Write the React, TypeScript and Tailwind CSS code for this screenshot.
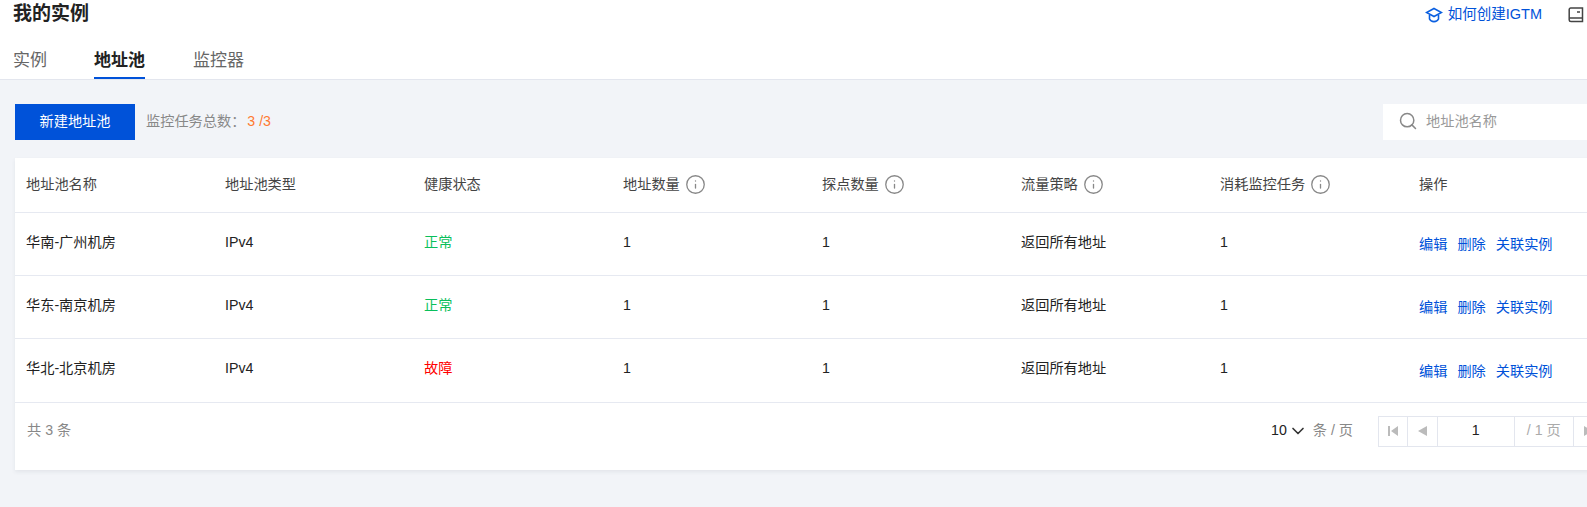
import { Info, Search, ChevronDown } from 'lucide-react';

const columns = [
  { title: '地址池名称' },
  { title: '地址池类型' },
  { title: '健康状态' },
  { title: '地址数量', tip: true },
  { title: '探点数量', tip: true },
  { title: '流量策略', tip: true },
  { title: '消耗监控任务', tip: true },
  { title: '操作' },
];

const rows = [
  { name: '华南-广州机房', ok: true },
  { name: '华东-南京机房', ok: true },
  { name: '华北-北京机房', ok: false },
];

const App = () => {
  return (
    <div className="h-[507px] w-[1587px] overflow-hidden bg-[#f2f4f8] font-['Liberation_Sans','Noto_Sans_CJK_SC',sans-serif] text-[14.2px] text-[#333]">
      {/* Header */}
      <div className="h-[80px] border-b border-[#e3e6ee] bg-white">
        <div className="flex h-[29px] items-center justify-between pl-[13px] pr-[3px]">
          <h1 className="text-[19px] font-bold text-[#222]">我的实例</h1>
          <div className="flex items-center">
            <a className="flex items-center text-[14.5px] text-[#0052d9]">
              <svg width="18" height="16" viewBox="0 0 18 16" fill="none" stroke="#0a5fe0" strokeWidth="1.6" className="mr-[5px]">
                <path d="M9 1.5 L16.5 5.5 L9 9.5 L1.5 5.5 Z" />
                <path d="M4.5 8 V12 C6 15.5 12 15.5 13.5 12 V8" />
              </svg>
              如何创建IGTM
            </a>
            <svg width="16" height="16" viewBox="0 0 16 16" fill="none" stroke="#444" strokeWidth="1.5" className="ml-[26px]">
              <path d="M3 14.5 C1.8 14.5 1.2 14 1.2 13 V2.5 C1.2 1.6 1.8 1 2.7 1 H14.5 V14.5 Z" />
              <path d="M1.2 11 H14.5 M9 5 H12" />
            </svg>
          </div>
        </div>
        <div className="mt-[11px] flex h-[39px] pl-[13px] text-[17px]">
          <div className="mr-[47px] pt-[8px] text-[#666]">实例</div>
          <div className="mr-[48px] h-[39px] border-b-[2px] border-[#0052d9] pt-[8px] font-bold text-[#222]">地址池</div>
          <div className="pt-[8px] text-[#666]">监控器</div>
        </div>
      </div>

      {/* Toolbar */}
      <div className="mt-[24px] flex h-[36px] items-center pl-[15px]">
        <button className="h-[36px] w-[120px] bg-[#0052d9] text-white">新建地址池</button>
        <div className="ml-[11px] text-[#888]">
          监控任务总数：<span className="ml-[2px] text-[#ff7a30]">3 /3</span>
        </div>
        <div className="ml-auto flex h-[36px] w-[204px] items-center bg-white pl-[15px] text-[#999]">
          <Search size={20} strokeWidth={1.8} className="mr-[8px] mb-[2px] text-[#888]" />
          地址池名称
        </div>
      </div>

      {/* Table */}
      <div className="ml-[15px] mt-[18px] w-[1592px] bg-white shadow-[0_2px_4px_rgba(54,58,80,0.08)]">
        <div className="grid h-[55px] grid-cols-[repeat(8,199px)] items-center border-b border-[#e6e9f1] pl-[11px] text-[#444]">
          {columns.map((col) => (
            <div key={col.title} className="flex items-center">
              {col.title}
              {col.tip && <Info size={21} strokeWidth={1.5} className="ml-[5px] text-[#888]" />}
            </div>
          ))}
        </div>
        {rows.map((row, i) => (
          <div
            key={row.name}
            className={`grid grid-cols-[repeat(8,199px)] items-center border-b border-[#e6e9f1] pb-[3px] pl-[11px] text-[#222] ${i === 2 ? 'h-[64px]' : 'h-[63px]'}`}
          >
            <div className="whitespace-nowrap">{row.name}</div>
            <div>IPv4</div>
            <div className={row.ok ? 'text-[#0abf5b]' : 'text-[#ff0000]'}>{row.ok ? '正常' : '故障'}</div>
            <div>1</div>
            <div>1</div>
            <div>返回所有地址</div>
            <div>1</div>
            <div className="flex gap-[10px] pt-[5px] text-[#0052d9]">
              <span>编辑</span>
              <span>删除</span>
              <span>关联实例</span>
            </div>
          </div>
        ))}
        {/* Pagination */}
        <div className="flex h-[67px] items-center whitespace-nowrap pb-[11px] pl-[12px]">
          <div className="w-[1244px] shrink-0 text-[#888]">共 3 条</div>
          <span className="text-[#222]">10</span>
          <ChevronDown size={20} strokeWidth={2} className="ml-[1px] text-[#333]" />
          <span className="ml-[5px] w-[65px] text-[#888]">条 / 页</span>
          <div className="flex h-[31px] shrink-0 border border-[#e3e6ee] text-[#222]">
            <div className="flex w-[29px] items-center justify-center border-r border-[#e3e6ee]">
              <svg width="10" height="10" viewBox="0 0 10 10" fill="#bbb"><path d="M0 0h2v10H0zM10 0v10L3 5z" /></svg>
            </div>
            <div className="flex w-[30px] items-center justify-center border-r border-[#e3e6ee]">
              <svg width="9" height="10" viewBox="0 0 9 10" fill="#bbb"><path d="M9 0v10L0 5z" /></svg>
            </div>
            <div className="flex w-[77px] items-center justify-center border-r border-[#e3e6ee]">1</div>
            <div className="flex w-[59px] items-center justify-center border-r border-[#e3e6ee] text-[#aaa]">/ 1 页</div>
            <div className="flex w-[29px] items-center justify-center">
              <svg width="9" height="10" viewBox="0 0 9 10" fill="#bbb"><path d="M0 0v10l9-5z" /></svg>
            </div>
          </div>
        </div>
      </div>
    </div>
  );
};

export default App;
